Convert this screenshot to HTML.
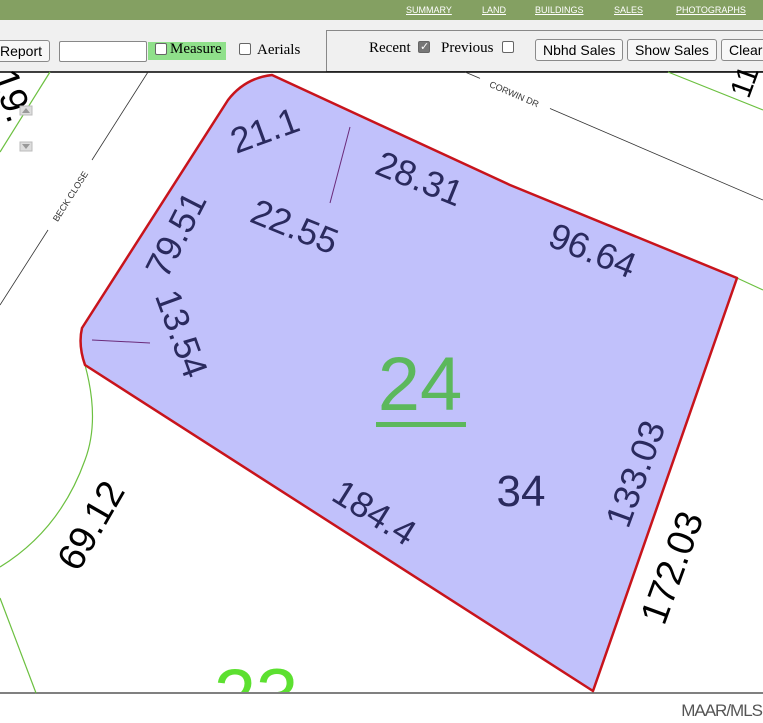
<!DOCTYPE html>
<html><head><style>
*{margin:0;padding:0;box-sizing:border-box}
body{width:763px;height:723px;overflow:hidden;background:#fff;position:relative;font-family:"Liberation Serif",serif}
.top{position:absolute;left:0;top:0;width:763px;height:20px;background:#84a062}
.top a{position:absolute;top:5px;font:9px "Liberation Sans",sans-serif;color:#fff;text-decoration:underline}
.bar{position:absolute;left:0;top:20px;width:763px;height:52px;background:#f0f0f0}
.btn{position:absolute;height:22px;border:1px solid #8a8a8a;border-radius:3px;background:#f7f7f7;font:14px "Liberation Sans",sans-serif;line-height:20px;padding:0 7px;color:#000}
.cb{position:absolute;width:12px;height:12px;border:1px solid #666;border-radius:2px;background:#fff}
.lbl{position:absolute;font-size:15px;color:#000}
.panel{position:absolute;left:326px;top:30px;width:440px;height:42px;border:1px solid #888;border-right:none;background:#f0f0f0}
</style></head><body>
<div class="top">
<a style="left:406px">SUMMARY</a><a style="left:482px">LAND</a><a style="left:535px">BUILDINGS</a><a style="left:614px">SALES</a><a style="left:676px">PHOTOGRAPHS</a>
</div>
<div class="bar"></div>
<div class="btn" style="left:-8px;top:40px">Report</div>
<div style="position:absolute;left:59px;top:41px;width:88px;height:21px;border:1px solid #888;border-radius:2px;background:#fff"></div>
<div style="position:absolute;left:148px;top:42px;width:78px;height:18px;background:#8fe08a"></div>
<div class="cb" style="left:155px;top:43px"></div>
<div class="lbl" style="left:170px;top:41px">Measure</div>
<div class="cb" style="left:239px;top:43px"></div>
<div class="lbl" style="left:257px;top:42px">Aerials</div>
<div class="panel"></div>
<div class="lbl" style="left:369px;top:40px">Recent</div>
<div class="cb" style="left:418px;top:41px;background:#777"></div>
<div style="position:absolute;left:420px;top:40px;color:#fff;font:11px sans-serif">✓</div>
<div class="lbl" style="left:441px;top:40px">Previous</div>
<div class="cb" style="left:502px;top:41px"></div>
<div class="btn" style="left:535px;top:39px">Nbhd Sales</div>
<div class="btn" style="left:627px;top:39px">Show Sales</div>
<div class="btn" style="left:721px;top:39px;border-right:none">Clear</div>
<svg style="position:absolute;left:0;top:0" width="763" height="723" font-family="Liberation Sans, sans-serif">
<line x1="0" y1="72" x2="763" y2="72" stroke="#000" stroke-width="1.5"/>
<line x1="0" y1="693" x2="763" y2="693" stroke="#000" stroke-width="1"/>
<g stroke="#6cc040" stroke-width="1.2" fill="none">
<line x1="50" y1="72" x2="0" y2="152"/>
<line x1="668" y1="72" x2="763" y2="110"/>
<line x1="737" y1="278" x2="763" y2="290"/>
<path d="M85 365 Q100 420 85 460 Q60 530 0 567"/>
<line x1="0" y1="598" x2="36" y2="693"/>
</g>
<g stroke="#333" stroke-width="0.8" fill="none">
<line x1="148" y1="72" x2="92" y2="160"/>
<line x1="48" y1="230" x2="0" y2="305"/>
<line x1="465" y1="72" x2="480" y2="78.4"/>
<line x1="550" y1="108.5" x2="763" y2="200"/>
</g>
<text x="0" y="0" font-size="9" fill="#333" transform="translate(73,198) rotate(-57.6)" text-anchor="middle">BECK CLOSE</text>
<text x="0" y="0" font-size="9" fill="#333" transform="translate(513,97) rotate(23.2)" text-anchor="middle">CORWIN DR</text>
<path d="M272 75 L510 185 L737 278 L593 691 L85 365 Q78 345 82 328 L228 100 Q245 78 272 75 Z" fill="#c1c1fb" stroke="#c8141c" stroke-width="2.5" stroke-linejoin="round"/>
<line x1="350" y1="127" x2="330" y2="203" stroke="#6a2a7a" stroke-width="1"/>
<line x1="92" y1="340" x2="150" y2="343" stroke="#6a2a7a" stroke-width="1"/>
<g fill="#2a2a5e" font-size="36" text-anchor="middle">
<text transform="translate(269,142) rotate(-20)">21.1</text>
<text transform="translate(415,190) rotate(22)">28.31</text>
<text transform="translate(290,238) rotate(22)">22.55</text>
<text transform="translate(588,262) rotate(22)">96.64</text>
<text transform="translate(187,240) rotate(-63)">79.51</text>
<text transform="translate(170,338) rotate(70)">13.54</text>
<text transform="translate(368,523) rotate(32)">184.4</text>
<text x="521" y="506" font-size="44">34</text>
<text transform="translate(647,478) rotate(-70)">133.03</text>
</g>
<g fill="#000" font-size="38" text-anchor="middle">
<text transform="translate(684,572) rotate(-70)">172.03</text>
<text transform="translate(102,532) rotate(-60)">69.12</text>
<text transform="translate(0,100) rotate(70)">19.</text>
<text transform="translate(754,85) rotate(-70)" font-size="30">11</text>
</g>
<text x="420" y="410" font-size="76" fill="#5cb85c" text-anchor="middle">24</text>
<rect x="376" y="422" width="90" height="5" fill="#5cb85c"/>
<clipPath id="c"><rect x="0" y="0" width="763" height="692"/></clipPath>
<text x="256" y="722" font-size="76" fill="#5ce030" text-anchor="middle" clip-path="url(#c)">23</text>
<rect x="20" y="106" width="12" height="9" fill="#ddd" stroke="#bbb"/>
<path d="M22 113 L26 108 L30 113 Z" fill="#999"/>
<rect x="20" y="142" width="12" height="9" fill="#ddd" stroke="#bbb"/>
<path d="M22 144 L26 149 L30 144 Z" fill="#999"/>
<text x="762" y="716" font-size="17" fill="#555" text-anchor="end" letter-spacing="-1">MAAR/MLS</text>
</svg>
</body></html>
